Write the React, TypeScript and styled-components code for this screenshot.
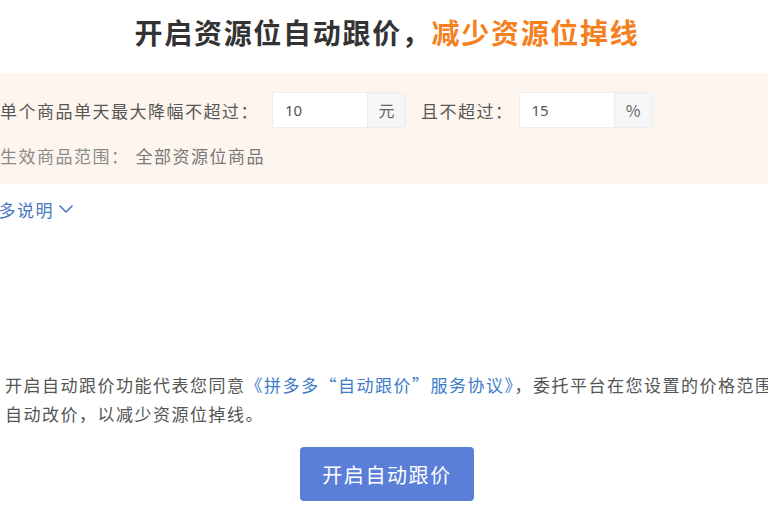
import React from 'react';
import styled, { createGlobalStyle } from 'styled-components';

const GlobalStyle = createGlobalStyle`
  html, body {
    margin: 0;
    padding: 0;
    background: #ffffff;
    overflow: hidden;
  }
  body {
    font-family: "Noto Sans CJK SC", "Noto Sans", sans-serif;
  }
`;

const Page = styled.div`
  width: 814px;
  margin-left: -20px;
  height: 510px;
  display: flex;
  flex-direction: column;
`;

const Title = styled.h1`
  margin: 0;
  height: 72px;
  display: flex;
  align-items: center;
  justify-content: center;
  padding-bottom: 8px;
  box-sizing: border-box;
  font-size: 28px;
  font-weight: 700;
  letter-spacing: 1.7px;
  color: #333333;
`;

const Accent = styled.span`
  color: #f5801e;
`;

const Panel = styled.div`
  background: #fef6ee;
  height: 111px;
  margin-top: 1px;
  box-sizing: border-box;
  padding: 19px 0 0 20px;
  display: flex;
  flex-direction: column;
  gap: 9px;
`;

const Row = styled.div`
  display: flex;
  align-items: center;
  height: 36px;
`;

const Label = styled.span<{ $muted?: boolean; $gap: number }>`
  font-size: 17px;
  letter-spacing: 1.5px;
  color: ${p => (p.$muted ? '#8a8a8a' : '#555555')};
  margin-right: ${p => p.$gap}px;
  white-space: nowrap;
`;

const Value = styled.span`
  font-size: 17px;
  letter-spacing: 1.5px;
  color: #777777;
`;

const InputGroup = styled.div`
  display: flex;
  height: 36px;
  border: 1px solid #ececec;
  border-radius: 3px;
  box-sizing: border-box;
  overflow: hidden;
  margin-right: 15px;
`;

const Input = styled.input`
  width: 94px;
  border: none;
  outline: none;
  padding: 0 12px;
  box-sizing: border-box;
  font-family: "Noto Sans", "Noto Sans CJK SC", sans-serif;
  font-size: 15px;
  color: #555555;
  background: #ffffff;
`;

const Addon = styled.span`
  width: 37px;
  display: flex;
  align-items: center;
  justify-content: center;
  background: #f6f6f6;
  border-left: 1px solid #ececec;
  font-size: 16px;
  color: #666666;
`;

const MoreLink = styled.a`
  display: flex;
  align-items: center;
  gap: 4px;
  margin: 14px 0 0 0;
  height: 22px;
  font-size: 17px;
  letter-spacing: 1.5px;
  color: #4a78c0;
  cursor: pointer;
`;

const Agreement = styled.p`
  margin: 150px 0 0 25px;
  font-size: 17px;
  letter-spacing: 1.5px;
  line-height: 29px;
  color: #555555;
  white-space: nowrap;
`;

const Link = styled.a`
  color: #3d7cc9;
  cursor: pointer;
`;

const Button = styled.button`
  align-self: center;
  margin-top: 19px;
  width: 174px;
  height: 54px;
  border: none;
  border-radius: 4px;
  background: #5b7fd8;
  color: #ffffff;
  font-family: "Noto Sans CJK SC", sans-serif;
  font-size: 20px;
  letter-spacing: 1.6px;
  cursor: pointer;
`;

const Chevron = () => (
  <svg width="16" height="16" viewBox="0 0 16 16" fill="none">
    <path d="M2 5l6 6 6-6" stroke="#4a78c0" strokeWidth="1.6" strokeLinecap="round" strokeLinejoin="round" />
  </svg>
);

export default function App() {
  return (
    <>
      <GlobalStyle />
      <Page>
        <Title>
          开启资源位自动跟价，<Accent>减少资源位掉线</Accent>
        </Title>
        <Panel>
          <Row>
            <Label $gap={13}>单个商品单天最大降幅不超过：</Label>
            <InputGroup>
              <Input defaultValue="10" />
              <Addon>元</Addon>
            </InputGroup>
            <Label $gap={5}>且不超过：</Label>
            <InputGroup>
              <Input defaultValue="15" />
              <Addon>%</Addon>
            </InputGroup>
          </Row>
          <Row>
            <Label $muted $gap={6}>生效商品范围：</Label>
            <Value>全部资源位商品</Value>
          </Row>
        </Panel>
        <MoreLink>
          更多说明
          <Chevron />
        </MoreLink>
        <Agreement>
          开启自动跟价功能代表您同意<Link>《拼多多“自动跟价”服务协议》</Link>，委托平台在您设置的价格范围内
          <br />
          自动改价，以减少资源位掉线。
        </Agreement>
        <Button>开启自动跟价</Button>
      </Page>
    </>
  );
}
